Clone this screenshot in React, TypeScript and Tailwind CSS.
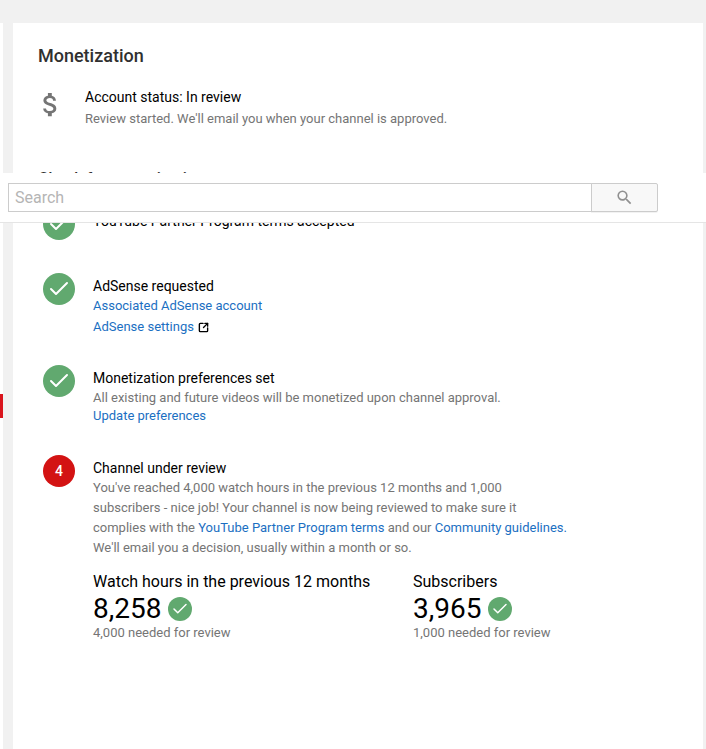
import { Check, SquareArrowOutUpRight } from 'lucide-react';
import { MdAttachMoney, MdSearch } from 'react-icons/md';
import type { ReactNode } from 'react';

const linkCls = 'text-[#1b6fc2]';

const Done = ({ small = false }: { small?: boolean }) => (
  <div className={`flex shrink-0 items-center justify-center rounded-full bg-[#61a96f] ${small ? 'h-6 w-6' : 'h-8 w-8'}`}>
    <Check className={`text-white ${small ? 'h-[18px] w-[18px]' : 'h-6 w-6'}`} strokeWidth={2} />
  </div>
);

const Step = ({ icon, title, children, className }: { icon: ReactNode; title: string; children?: ReactNode; className?: string }) => (
  <div className={`flex ${className ?? ''}`}>
    <div className="w-[50px] shrink-0">{icon}</div>
    <div className="flex-1 pt-[3px]">
      <div className="text-sm leading-5 text-black">{title}</div>
      {children}
    </div>
  </div>
);

const Stat = ({ label, value, need, className }: { label: string; value: string; need: string; className: string }) => (
  <div className={className}>
    <div className="text-base leading-5 text-black">{label}</div>
    <div className="flex h-[33px] items-center gap-[7px] text-[28px] text-black">
      {value}
      <Done small />
    </div>
    <div className="text-[13px] leading-4 text-[#757575]">{need}</div>
  </div>
);

export default function App() {
  return (
    <div className="relative flex min-h-[749px] bg-[#f1f1f1] pt-[23px] font-['Roboto',sans-serif]">
      {/* Barra lateral */}
      <div className="relative w-[3px] shrink-0 bg-white">
        <div className="absolute left-0 top-[371px] h-6 w-[3px] bg-[#d9141c]" />
      </div>

      <main className="ml-[10px] mr-[3px] h-[726px] flex-1 overflow-hidden bg-white pl-[25px] pt-[22px]">
        <h2 className="text-lg font-medium leading-[22px] text-[#303030]">Monetization</h2>

        <div className="mt-[20px] flex h-[42px]">
          <MdAttachMoney className="-ml-[3px] mt-[2px] h-[31px] w-[31px] shrink-0 text-[#757575]" />
          <div className="ml-[19px]">
            <div className="text-sm leading-5 text-black">Account status: In review</div>
            <div className="mt-[2px] text-[13px] leading-5 text-[#757575]">Review started. We'll email you when your channel is approved.</div>
          </div>
        </div>

        <h3 className="mt-[40px] text-base font-medium leading-5 text-[#303030]">Check for monetization</h3>

        <div className="pl-[5px]">
          <Step className="mt-[19px]" icon={<Done />} title="YouTube Partner Program terms accepted" />

          <Step className="mt-[33px]" icon={<Done />} title="AdSense requested">
            <div className={`text-[13px] leading-5 ${linkCls}`}>Associated AdSense account</div>
            <div className={`mt-px flex items-center gap-[4px] text-[13px] leading-5 ${linkCls}`}>
              AdSense settings
              <SquareArrowOutUpRight className="h-[11px] w-[11px] text-black" strokeWidth={3} />
            </div>
          </Step>

          <Step className="mt-[28px]" icon={<Done />} title="Monetization preferences set">
            <div className="text-[13px] leading-5 text-[#757575]">All existing and future videos will be monetized upon channel approval.</div>
            <div className={`-mt-[2px] text-[13px] leading-5 ${linkCls}`}>Update preferences</div>
          </Step>

          <Step
            className="mt-[29px]"
            icon={<div className="flex h-8 w-8 items-center justify-center rounded-full bg-[#d31313] text-sm font-medium text-white">4</div>}
            title="Channel under review"
          >
            <p className="w-[476px] text-[13px] leading-5 text-[#757575]">
              You've reached 4,000 watch hours in the previous 12 months and 1,000 subscribers - nice job! Your channel is now being reviewed to make sure it complies with the <span className={linkCls}>YouTube Partner Program terms</span> and our <span className={linkCls}>Community guidelines.</span> We'll email you a decision, usually within a month or so.
            </p>
            <div className="mt-[14px] flex">
              <Stat className="w-[320px]" label="Watch hours in the previous 12 months" value="8,258" need="4,000 needed for review" />
              <Stat className="w-[200px]" label="Subscribers" value="3,965" need="1,000 needed for review" />
            </div>
          </Step>
        </div>
      </main>

      {/* Buscador superpuesto */}
      <div className="absolute left-0 right-0 top-[173px] flex h-[50px] items-start border-b border-[#e5e5e5] bg-white pl-2 pt-[10px]">
        <div className="flex h-[29px] w-[584px] items-center border border-[#cccccc] px-[6px] text-base text-[#b5b5b5]">Search</div>
        <button className="-ml-px flex h-[29px] w-[67px] items-center justify-center rounded-r-[2px] border border-[#cccccc] bg-[#f8f8f8] shadow-[0_1px_0_rgba(0,0,0,0.05)]">
          <MdSearch className="h-[19px] w-[19px] text-[#909090]" />
        </button>
      </div>
    </div>
  );
}
